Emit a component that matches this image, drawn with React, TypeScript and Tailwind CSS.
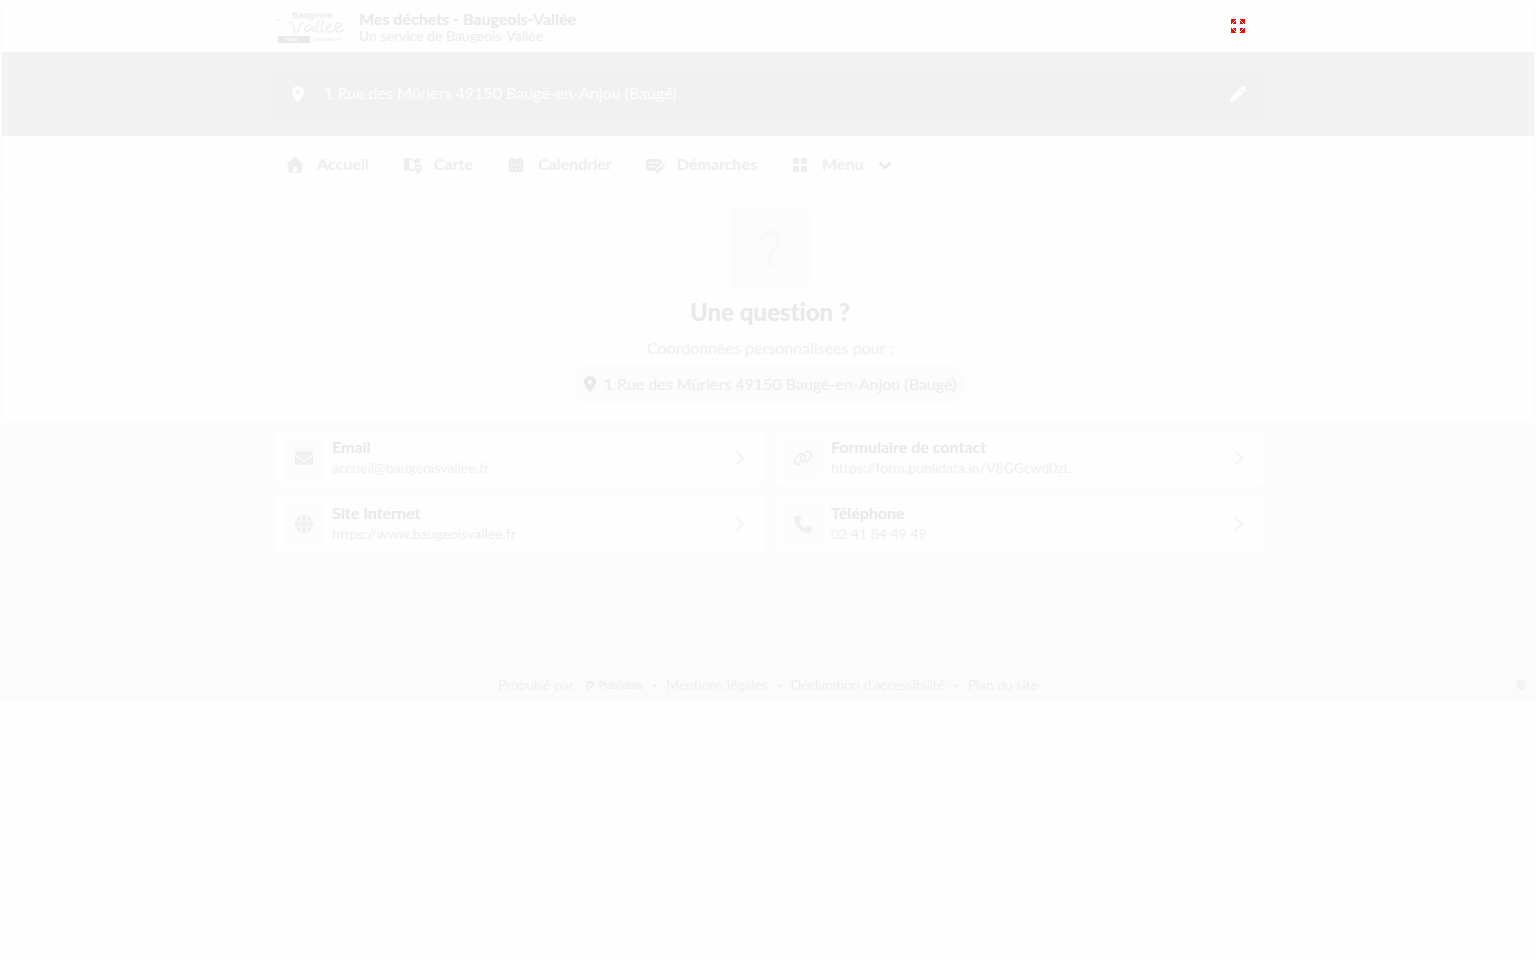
import React from 'react';
import clsx from 'clsx';
import { FaChevronRight, FaEnvelope, FaGlobe, FaLink, FaPhone } from 'react-icons/fa6';

const ADDRESS = '1 Rue des Mûriers 49150 Baugé-en-Anjou (Baugé)';

function PinIcon({ className }: { className?: string }) {
  return (
    <svg viewBox="0 0 12 16" className={clsx('h-4 w-3 shrink-0', className)} fill="currentColor" aria-hidden="true">
      <path
        fillRule="evenodd"
        d="M6 0a6 6 0 0 0-6 6c0 2.700 3.600 7.500 5.200 9.600a1 1 0 0 0 1.600 0C8.400 13.500 12 8.700 12 6a6 6 0 0 0-6-6Zm0 8a2 2 0 1 1 0-4 2 2 0 0 1 0 4Z"
      />
    </svg>
  );
}

function HomeIcon() {
  return (
    <svg viewBox="0 0 18 18" className="h-4.5 w-4.5" fill="currentColor" aria-hidden="true">
      <path
        fillRule="evenodd"
        d="M8.300 1.300a1 1 0 0 1 1.400 0l7.300 6.900a.8.800 0 0 1-.5 1.400h-.7v5.400a2 2 0 0 1-2 2H4.200a2 2 0 0 1-2-2V9.600h-.7A.8.800 0 0 1 1 8.200ZM8 11a1 1 0 0 0-1 1v4h4v-4a1 1 0 0 0-1-1Z"
      />
    </svg>
  );
}

function MapIcon() {
  return (
    <svg viewBox="0 0 18 18" className="h-4.5 w-4.5 overflow-visible" fill="currentColor" aria-hidden="true">
      <path d="M1 4a1 1 0 0 1 .6-.9L5 1.500v12.500l-3 1.500a.7.700 0 0 1-1-.7Z" />
      <path
        fillRule="evenodd"
        d="m5 1.500 6.500 2.200L16 1.800a.6.600 0 0 1 .8.500v5a4.400 4.400 0 0 0-5.300 1V5.200L6.500 3.500v8.700l4.300 1.600 1.200 1.900L5 14Z"
      />
      <path
        fillRule="evenodd"
        d="M15 8.200a3.600 3.600 0 0 0-3.600 3.600c0 1.600 1.900 4.300 3 5.600a.8.800 0 0 0 1.200 0c1.100-1.300 3-4 3-5.600A3.600 3.600 0 0 0 15 8.200Zm0 4.800a1.200 1.200 0 1 1 0-2.400 1.200 1.200 0 0 1 0 2.400Z"
      />
    </svg>
  );
}

function CalendarIcon() {
  return (
    <svg viewBox="0 0 18 18" className="h-4.5 w-4.5" fill="currentColor" aria-hidden="true">
      <path
        fillRule="evenodd"
        d="M5 1a1 1 0 0 1 1 1v1h6V2a1 1 0 0 1 2 0v1h.5A1.800 1.800 0 0 1 16.300 4.800V6H1.700V4.800A1.800 1.800 0 0 1 3.500 3H4V2a1 1 0 0 1 1-1ZM1.700 6h14.600v8.500a1.700 1.700 0 0 1-1.700 1.700H3.400a1.700 1.700 0 0 1-1.700-1.700ZM4.300 8.200v1.600h1.600V8.200Zm3.900 0v1.600h1.600V8.200Zm3.900 0v1.600h1.600V8.200Zm-7.800 4v1.600h1.600v-1.600Zm3.900 0v1.600h1.600v-1.600Zm3.900 0v1.600h1.600v-1.600Z"
      />
    </svg>
  );
}

function FormIcon() {
  return (
    <svg viewBox="0 0 18 18" className="h-4.5 w-4.5 overflow-visible" fill="currentColor" aria-hidden="true">
      <path
        fillRule="evenodd"
        d="M2 3h12a2 2 0 0 1 2 2v2L9 13.800V15H2a2 2 0 0 1-2-2V5a2 2 0 0 1 2-2Zm1 3v1.300h10V6Zm0 4v1.300h6V10Z"
      />
      <path d="m15 9.900 2.300 2.300-4.800 4.700-2.900.6.600-2.900Zm.8-.8.600-.6a1 1 0 0 1 1.500 0l.8.800a1 1 0 0 1 0 1.500l-.6.600Z" />
    </svg>
  );
}

function GridIcon() {
  return (
    <svg viewBox="0 0 18 18" className="h-4.5 w-4.5" fill="currentColor" aria-hidden="true">
      <rect x="2" y="2" width="6" height="6" rx="1.300" />
      <rect x="10" y="2" width="6" height="6" rx="1.300" />
      <rect x="2" y="10" width="6" height="6" rx="1.300" />
      <rect x="10" y="10" width="6" height="6" rx="1.300" />
    </svg>
  );
}

function ChevronIcon() {
  return (
    <svg viewBox="0 0 14 14" className="ml-0.5 h-3.5 w-3.5 text-[#e8e8e8]" aria-hidden="true">
      <path
        d="m2 5 5 5 5-5"
        fill="none"
        stroke="currentColor"
        strokeWidth="2.200"
        strokeLinecap="round"
        strokeLinejoin="round"
      />
    </svg>
  );
}

function PencilIcon() {
  return (
    <svg viewBox="0 0 16 16" className="h-4 w-4" fill="currentColor" aria-hidden="true">
      <path d="M9 3.200 12.800 7l-7.300 7.300a2 2 0 0 1-.8.500L.9 16a.7.700 0 0 1-.9-.9l1.200-3.800a2 2 0 0 1 .5-.8Zm.8-.8L11.500.8a2.400 2.400 0 0 1 3.700 3.700l-1.600 1.700Z" />
    </svg>
  );
}

function FullscreenIcon() {
  return (
    <svg viewBox="0 0 14 14" className="h-3.5 w-3.5" fill="#ff0000" shapeRendering="crispEdges" aria-hidden="true">
      <path d="M0 0h5v1h-1v1h-1v1h-1v1h-1v1h-1Z M5 2v3h-3v-1h1v-1h1v-1Z" />
      <path d="M14 0h-5v1h1v1h1v1h1v1h1v1h1Z M9 2v3h3v-1h-1v-1h-1v-1Z" />
      <path d="M0 14h5v-1h-1v-1h-1v-1h-1v-1h-1v-1h-1Z M5 12v-3h-3v1h1v1h1v1Z" />
      <path d="M14 14h-5v-1h1v-1h1v-1h1v-1h1v-1h1Z M9 12v-3h3v1h-1v1h-1v1Z" />
    </svg>
  );
}

function BrandLogo() {
  return (
    <svg viewBox="-4 0 70 36" className="h-9 w-[70px] shrink-0" role="img" aria-label="Baugeois Vallée">
      <text x="14" y="10" fontSize="9" fontWeight="700" fontFamily="Liberation Sans, sans-serif" fill="#ededed">
        Baugeois
      </text>
      <g fill="none" stroke="#f0f0f0" strokeWidth="1.500" strokeLinecap="round">
        <path d="M-1 12h2M11 15c3-3 4 1 5 6 1 5 3 6 5 0 1-4 2-6 4-6" />
        <path d="M34 18c-4-2-8 1-7 4s6 1 8-4c-1 4 0 6 2 5M41 13c-3 4-4 12 0 11M46 12c-3 5-4 13 0 12" />
        <path d="M49 20c5 0 5-4 2-3s-4 7 1 7 5-3 6-5M57 20c6 0 8-4 4-5s-6 8 0 9c2 0 3-1 4-2" />
      </g>
      <rect x="0" y="28" width="32" height="7" fill="#e9e9e9" />
      <text x="6" y="33" fontSize="5" fontWeight="700" fontFamily="Liberation Sans, sans-serif" fill="#fafafa">
        Anjou
      </text>
      <text x="34" y="33" fontSize="4" fontFamily="Liberation Sans, sans-serif" fill="#ebebeb">
        COMMUNAUTÉ
      </text>
    </svg>
  );
}

const navItems = [
  { label: 'Accueil', icon: <HomeIcon /> },
  { label: 'Carte', icon: <MapIcon /> },
  { label: 'Calendrier', icon: <CalendarIcon /> },
  { label: 'Démarches', icon: <FormIcon /> },
];

const contacts = [
  { title: 'Email', value: 'accueil@baugeoisvallee.fr', href: 'mailto:accueil@baugeoisvallee.fr', Icon: FaEnvelope },
  {
    title: 'Formulaire de contact',
    value: 'https://form.publidata.io/V8GGcwd0zL',
    href: 'https://form.publidata.io/V8GGcwd0zL',
    Icon: FaLink,
  },
  {
    title: 'Site Internet',
    value: 'https://www.baugeoisvallee.fr',
    href: 'https://www.baugeoisvallee.fr',
    Icon: FaGlobe,
  },
  { title: 'Téléphone', value: '02 41 84 49 49', href: 'tel:0241844949', Icon: FaPhone },
];

function Dot() {
  return <span className="mx-2.5 h-[3px] w-[3px] rounded-full bg-[#efefef]" />;
}

export default function App() {
  return (
    <div className="min-h-screen bg-[#fefefe] font-['Lato',sans-serif] text-[#e9e9e9] [font-variant-ligatures:none]">
      <div className="border-2 border-b-0 border-[#fcfcfc]">
        <header className="bg-[#fefefe] pb-0.5">
          <div className="mx-auto flex h-12 max-w-[988px] items-center justify-between">
            <div className="flex items-center gap-[15px]">
              <BrandLogo />
              <div>
                <h1 className="text-base font-bold leading-5">Mes déchets - Baugeois-Vallée</h1>
                <p className="text-sm leading-[14px] text-[#ececec]">Un service de Baugeois-Vallée</p>
              </div>
            </div>
            <button type="button" aria-label="Plein écran" className="mr-[17px]">
              <FullscreenIcon />
            </button>
          </div>
        </header>

        <div className="bg-[#f3f3f3] py-3.5">
          <div className="mx-auto flex h-14 max-w-[990px] items-center rounded bg-[#f1f1f1] pl-[19px] pr-[17px] text-[#fefefe]">
            <PinIcon />
            <span className="ml-5 flex-1 pb-0.5 text-base">{ADDRESS}</span>
            <button type="button" aria-label="Modifier l'adresse">
              <PencilIcon />
            </button>
          </div>
        </div>

        <nav className="border-b border-[#fbfbfb] bg-[#fefefe] text-[#eeeeee]">
          <div className="mx-auto flex h-[57px] max-w-[988px] items-center gap-[34px] px-3 font-bold">
            {navItems.map((item) => (
              <a key={item.label} href="#" className="flex items-center gap-[13px]">
                {item.icon}
                <span className="pb-0.5">{item.label}</span>
              </a>
            ))}
            <button type="button" className="flex items-center gap-[13px] font-bold">
              <GridIcon />
              <span className="pb-0.5">Menu</span>
              <ChevronIcon />
            </button>
          </div>
        </nav>

        <main>
          <section className="flex flex-col items-center bg-[#fefefe] pb-4 pl-1 pt-3.5">
            <div className="flex h-20 w-20 items-center justify-center rounded bg-[#fcfcfc] text-[#f8f8f8]">
              <svg viewBox="0 0 24 38" className="h-[38px] w-6" aria-hidden="true">
                <path
                  d="M3 12a9 9 0 1 1 14.500 7.500C14 22 12 22.500 12 27"
                  fill="none"
                  stroke="currentColor"
                  strokeWidth="4"
                  strokeLinecap="round"
                />
                <circle cx="12" cy="34.500" r="2.800" fill="currentColor" />
              </svg>
            </div>
            <h2 className="mt-2 text-2xl font-black leading-8">Une question ?</h2>
            <p className="mt-2 text-base text-[#efefef]">Coordonnées personnalisées pour :</p>
            <div className="mt-1 flex h-10 items-center gap-2 rounded-full bg-[#fcfcfc] px-2.5">
              <PinIcon />
              <span className="text-[#ececec]">{ADDRESS}</span>
            </div>
          </section>

          <section className="min-h-[250px] bg-[#fcfcfc] pl-1 pt-2.5">
            <div className="mx-auto grid max-w-[988px] grid-cols-2 gap-2.5">
              {contacts.map(({ title, value, href, Icon }) => (
                <a key={title} href={href} className="flex h-14 items-center rounded-md bg-[#fefefe] pl-2 pr-5">
                  <span className="flex h-10 w-10 items-center justify-center rounded bg-[#fcfcfc] text-[#f0f0f0]">
                    <Icon className={Icon === FaLink ? 'h-5 w-5' : 'h-[18px] w-[18px]'} />
                  </span>
                  <span className="ml-2 flex-1 pb-0.5">
                    <span className="block text-base font-bold leading-[21px]">{title}</span>
                    <span className="block text-sm leading-[21px] text-[#efefef]">{value}</span>
                  </span>
                  <FaChevronRight className="h-4 w-3 text-[#f4f4f4]" />
                </a>
              ))}
            </div>
          </section>
        </main>
      </div>

      <footer className="relative flex h-8 items-center justify-center bg-[#fbfbfb] pb-0.5 text-sm font-light text-[#e9e9e9]">
        <span>Propulsé par</span>
        <a href="#" className="ml-3 flex items-center gap-[5px] font-['Inter',sans-serif] text-[10px] font-medium text-[#efefef]">
          <svg viewBox="0 0 8 10" className="h-2.5 w-2" aria-hidden="true">
            <path
              d="M1.500 10V4.500a2.700 2.700 0 1 1 2.700 2.700"
              fill="none"
              stroke="currentColor"
              strokeWidth="2"
            />
          </svg>
          Publidata
        </a>
        <Dot />
        <a href="#">Mentions légales</a>
        <Dot />
        <a href="#">Déclaration d'accessibilité</a>
        <Dot />
        <a href="#">Plan du site</a>
        <span className="absolute right-2.5 h-2.5 w-2.5 rounded-full bg-[#f3f3f3]" />
      </footer>
    </div>
  );
}
